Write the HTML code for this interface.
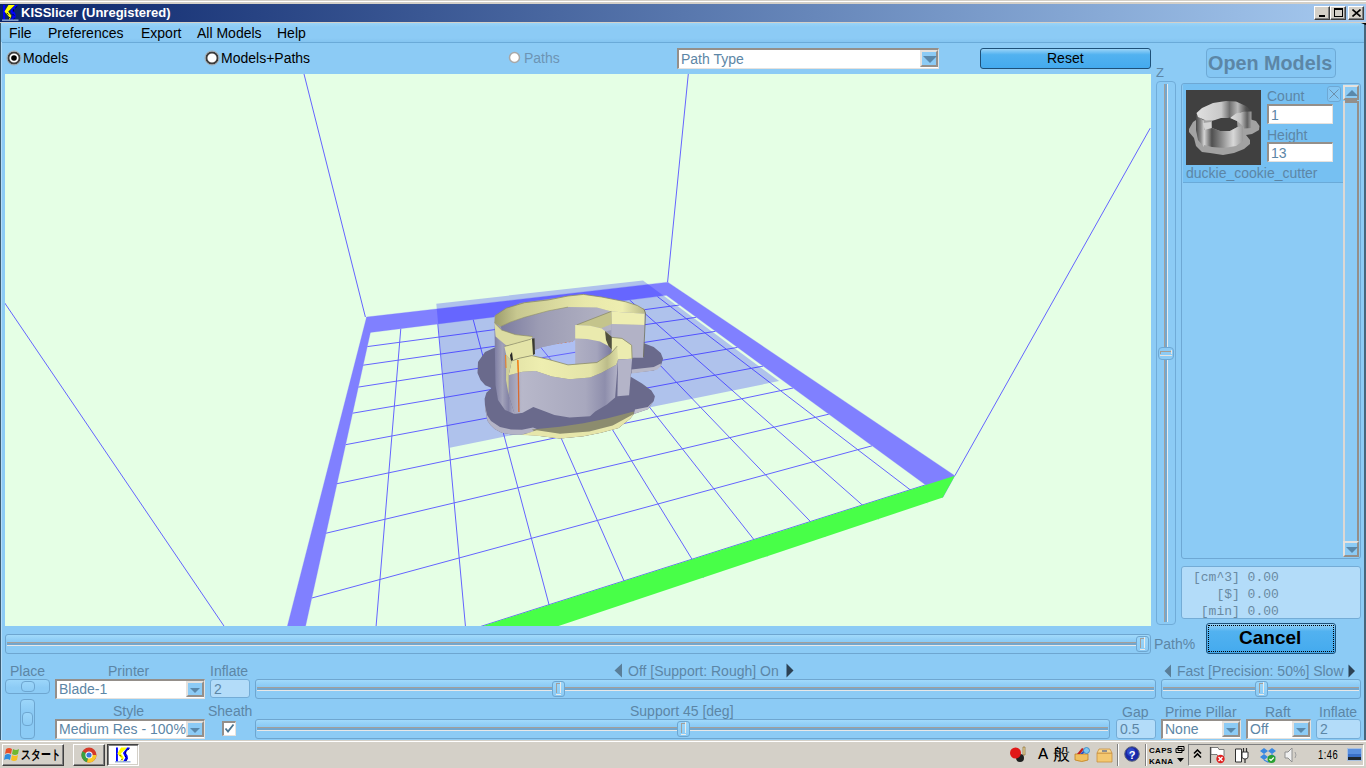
<!DOCTYPE html>
<html><head><meta charset="utf-8">
<style>
*{box-sizing:border-box;margin:0;padding:0}
html,body{width:1366px;height:768px;overflow:hidden;background:#8ccbf5;font-family:"Liberation Sans",sans-serif;position:relative}
.a{position:absolute}
.t{position:absolute;white-space:pre;line-height:1}
.lbl{color:#5c86a6;font-size:14px}
.blk{color:#000;font-size:14px}
.wb{position:absolute;top:6px;width:16px;height:14px;background:#d4d0c8;border:1px solid;border-color:#fff #404040 #404040 #fff;box-shadow:inset -1px -1px #808080}
.frame{position:absolute;border:1px solid #6ea8d4;border-radius:3px}
.inp{position:absolute;background:#fff;border-top:2px solid #948f8a;border-left:2px solid #948f8a;border-bottom:1px solid #e6e2de;border-right:1px solid #e6e2de}
.ddbtn{position:absolute;background:#8ccbf5;border:2px solid;border-color:#e6e2de #948f8a #948f8a #e6e2de}
.tri{position:absolute;width:0;height:0;border-left:6px solid transparent;border-right:6px solid transparent;border-top:6px solid #5a88aa}
.fld{position:absolute;background:#b3dcf9;border:1px solid #74acd6;border-radius:3px}
.track{position:absolute;height:2px;background:#8a9eae;border-bottom:0}
.trackl{position:absolute;height:1px;background:#e0e8ee}
.thumb{position:absolute;border:1px solid #6ea8d4;border-radius:3px;background:#8ccbf5}
</style></head><body>
<!-- window top -->
<div class="a" style="left:0;top:0;width:1366px;height:4px;background:#d4d0c8"></div>
<div class="a" style="left:0;top:1px;width:1366px;height:1px;background:#fff"></div>
<div class="a" style="left:0;top:4px;width:1366px;height:18px;background:linear-gradient(to right,#0a246a,#a6caf0)"></div>
<svg class="a" style="left:2px;top:5px" width="17" height="16" viewBox="0 0 16.5 15.5"><path d="M1 0h2v15h-2z" fill="#0000ff"/>
<path d="M12.5 0L15.2 0L14.8 1.2L12.6 3L11.2 5.6L13 8.5L13.4 11.5L12 13.8L8 15L9.6 12.5L10.6 10.5L9.2 7.8L8.2 5.6Z" fill="#0000ff"/>
<path d="M6.3 0L12.5 0L6 6.3L9.1 10.4L7.2 15L6.8 11.5L2.4 6.3Z" fill="#ffff00"/>
<path d="M14.5 1.5l-1.2 1M11 4.5v1.5M10.5 9l1 1M12 13l-1 1M7.5 12l-1 1M5 8l1 1" stroke="#000" stroke-width="0.8" stroke-linecap="round"/>
<path d="M0 14h16v1.5h-16z" fill="#8ea8d0" opacity="0.9"/>
</svg>
<div class="t" style="left:21px;top:6px;font-size:13px;font-weight:bold;color:#fff">KISSlicer (Unregistered)</div>
<div class="wb" style="left:1314px"><div class="a" style="left:4px;top:8px;width:6px;height:2px;background:#000"></div></div>
<div class="wb" style="left:1330px"><div class="a" style="left:3px;top:1px;width:9px;height:9px;border:1px solid #000;border-top-width:2px"></div></div>
<div class="wb" style="left:1348px"><svg class="a" style="left:3px;top:2px" width="9" height="8"><path d="M0.5 0.5L8.5 7.5M8.5 0.5L0.5 7.5" stroke="#000" stroke-width="1.6"/></svg></div>
<div class="a" style="left:0;top:22px;width:1366px;height:1px;background:#d4d0c8"></div>

<!-- menu -->
<div class="a" style="left:0;top:23px;width:1366px;height:19px;background:linear-gradient(#9ad4f8 0,#8ccbf5 4px,#8ccbf5 15px,#84c4f0 19px)"></div>
<div class="a" style="left:0;top:42px;width:1366px;height:1px;background:#6aaad8"></div>
<div class="t blk" style="left:9px;top:26px">File</div>
<div class="t blk" style="left:48px;top:26px">Preferences</div>
<div class="t blk" style="left:141px;top:26px">Export</div>
<div class="t blk" style="left:197px;top:26px">All Models</div>
<div class="t blk" style="left:277px;top:26px">Help</div>

<!-- borders -->
<div class="a" style="left:0;top:23px;width:1px;height:717px;background:#3c5c72"></div><div class="a" style="left:1px;top:42px;width:1px;height:698px;background:#b4dcf8"></div>
<div class="a" style="left:1364px;top:23px;width:2px;height:717px;background:#46667c"></div><div class="a" style="left:1361px;top:23px;width:5px;height:2px;background:#000;clip-path:polygon(0 0,100% 0,100% 100%)"></div>

<!-- toolbar -->
<!-- radio Models -->
<svg class="a" style="left:6px;top:50px" width="16" height="16"><circle cx="8" cy="8" r="5.6" fill="#fff" stroke="#3c3c3c" stroke-width="2"/><circle cx="8" cy="8" r="7" fill="none" stroke="#a8a8a8" stroke-width="1"/><circle cx="8" cy="8" r="2.8" fill="#000"/></svg>
<div class="t blk" style="left:23px;top:51px">Models</div>
<svg class="a" style="left:204px;top:50px" width="16" height="16"><circle cx="8" cy="8" r="5.6" fill="#fff" stroke="#3c3c3c" stroke-width="2"/><circle cx="8" cy="8" r="7" fill="none" stroke="#a8a8a8" stroke-width="1"/></svg>
<div class="t blk" style="left:221px;top:51px">Models+Paths</div>
<svg class="a" style="left:508px;top:51px" width="14" height="14"><circle cx="6.5" cy="6.5" r="5" fill="#fff" stroke="#a8a8a8" stroke-width="1.5"/></svg>
<div class="t lbl" style="left:524px;top:51px;color:#6c94b4">Paths</div>
<!-- Path Type dropdown -->
<div class="inp" style="left:677px;top:48px;width:262px;height:21px"></div>
<div class="t lbl" style="left:681px;top:52px;color:#5c86a6">Path Type</div>
<div class="ddbtn" style="left:920px;top:50px;width:18px;height:17px"><div class="tri" style="left:1px;top:4px;border-left-width:7px;border-right-width:7px;border-top-width:7px"></div></div>
<!-- Reset button -->
<div class="a" style="left:980px;top:48px;width:171px;height:21px;border:1px solid #1e5078;border-radius:3px;background:linear-gradient(#9ad4f8 0,#52b2f0 30%,#44aaee 100%)"></div>
<div class="t blk" style="left:1047px;top:51px">Reset</div>


<!-- viewport -->
<div class="a" style="left:5px;top:74px;width:1146px;height:552px;background:#e5ffe5;overflow:hidden">
<svg width="1146" height="552" viewBox="0 0 1146 552" style="position:absolute;left:0;top:0" shape-rendering="crispEdges">
<line x1="299.0" y1="0.0" x2="360.4" y2="243.0" stroke="#6464ff" stroke-width="1" shape-rendering="auto"/>
<line x1="683.3" y1="0.0" x2="662.6" y2="208.0" stroke="#6464ff" stroke-width="1" shape-rendering="auto"/>
<line x1="1145.2" y1="54.2" x2="949.9" y2="401.7" stroke="#6464ff" stroke-width="1" shape-rendering="auto"/>
<line x1="-0.4" y1="228.8" x2="219.3" y2="552.5" stroke="#6464ff" stroke-width="1" shape-rendering="auto"/>
<path d="M395.8 254.6L365.9 614.7M432.8 250.0L463.2 582.2M468.2 245.6L550.0 553.1M502.1 241.3L627.9 527.1M534.7 237.2L698.3 503.6M565.8 233.3L762.1 482.3M595.8 229.6L820.2 462.9M624.6 226.0L873.3 445.1M652.3 222.5L922.2 428.8M362.3 272.6L674.5 231.0M358.2 291.2L691.3 243.3M353.3 313.1L710.5 257.3M347.6 339.2L732.5 273.4M340.6 370.7L758.1 292.1M332.0 409.7L788.1 314.0M321.1 459.2L823.8 340.2M306.8 524.0L867.1 371.8M287.3 612.4L920.5 410.9" stroke="#6464ff" stroke-width="1" fill="none" shape-rendering="auto"/>
<path d="M365.41 258.43 L661.38 221.37 L662.76 208.14 L361.58 243.05ZM365.41 258.43 L280.45 643.26 L265.01 619.76 L361.58 243.05ZM661.38 221.37 L937.81 423.53 L949.88 401.71 L662.76 208.14Z" fill="#8080ff" fill-rule="nonzero" stroke="#8080ff" stroke-width="0.3" shape-rendering="auto"/>
<polygon points="280.5,643.3 937.8,423.5 949.9,401.7 265.0,619.8" fill="#48ff48" shape-rendering="auto"/>
<polygon points="431.3,229.7 638.0,206.4 774.1,307.1 444.7,373.7" fill="#2424ff" fill-opacity="0.28" shape-rendering="auto"/>
<g transform="translate(-5,-74)" shape-rendering="auto"><defs>
<linearGradient id="wallg" x1="0" x2="1" y1="0" y2="0">
<stop offset="0" stop-color="#9494ae"/><stop offset="0.12" stop-color="#b8b8ca"/><stop offset="0.4" stop-color="#b0b0c4"/><stop offset="0.7" stop-color="#a8a8be"/><stop offset="0.88" stop-color="#8e8eac"/><stop offset="1" stop-color="#b4b4c8"/>
</linearGradient>
<linearGradient id="backg" x1="0" x2="1" y1="0" y2="0">
<stop offset="0" stop-color="#7c7ca0"/><stop offset="0.35" stop-color="#9c9cb4"/><stop offset="1" stop-color="#b4b4c4"/>
</linearGradient>
<linearGradient id="rimg" x1="0" x2="1" y1="0" y2="0">
<stop offset="0" stop-color="#9c9c6c"/><stop offset="0.15" stop-color="#c8c890"/><stop offset="0.6" stop-color="#e8e8aa"/><stop offset="0.85" stop-color="#eeeeb0"/><stop offset="1" stop-color="#b8b888"/>
</linearGradient>
<linearGradient id="frimg" x1="0" x2="1" y1="0" y2="0">
<stop offset="0" stop-color="#e2e2a6"/><stop offset="0.3" stop-color="#eeeeb0"/><stop offset="0.75" stop-color="#e4e4a8"/><stop offset="0.9" stop-color="#bcbc8a"/><stop offset="1" stop-color="#e0e0a6"/>
</linearGradient>
<linearGradient id="beakg" x1="0" x2="1" y1="0" y2="0">
<stop offset="0" stop-color="#b0b0c4"/><stop offset="0.6" stop-color="#a4a4bc"/><stop offset="1" stop-color="#7a7aa0"/>
</linearGradient>
</defs>
<!-- flange dark blob -->
<path d="M496 347 L485 352 L478 362 L477.5 373 L480.5 380 L485.2 385.2 L491.7 388.1 L486.4 392.8 L484.6 398.7 L485.2 409.2 L487.6 420.9 L490.5 425 L494.6 429.1 L501.6 432.7 L511 434.4 L521.6 434.5 L540 436 L560 438.5 L583.4 436.2 L601 432.7 L618.6 428 L630.3 418.6 L633.8 413.9 L647.9 409.2 L653.75 401 L654.9 396.3 L651.4 390.5 L642 383.4 L630.3 376.4 L631.5 372.9 L653.75 370.5 L660.8 365.9 L663.1 358.8 L660.8 353 L653.75 347.1 L642 342.4 L631.5 341.25 L600 330 L520 330 Z" fill="#6a6a8c"/>
<!-- lit edge left -->
<path d="M485 405 L487 415 L491 421 L500 427 L511 429.5 L522 429.8 L533 427.5 L540 430.3 L521.6 434.5 L511 434.4 L501.6 432.7 L494.6 429.1 L490.5 425 L487.6 420.9 L485.2 409.2 Z" fill="#b4b4c6"/>
<path d="M631.5 369.4 L653.75 367 L660.8 363.5 L660.8 365.9 L657.3 369.4 L653.75 370.5 L631.5 373.5 Z" fill="#b8b8c8"/>
<path d="M635 409.5 L647.9 406.9 L653 401.5 L647.9 409.2 L633.8 413.9 Z" fill="#c0c0cc"/>
<!-- khaki + cream bottom -->
<path d="M532 429.5 L560 426.8 L583.4 423.3 L606.9 418.6 L633.8 411.6 L633.8 413.9 L630.3 418.6 L618.6 428 L601 432.7 L583.4 436.2 L560 438.5 L540 436 Z" fill="#8c8c6e"/>
<path d="M536.8 430.3 L560 433.8 L589.3 431.5 L612.7 425.6 L633.8 413.9 L630.3 418.6 L618.6 428 L601 432.7 L583.4 436.2 L560 438.5 L540 436 L521.6 435 Z" fill="#e6e6aa"/>

<path d="M494.4 316 L520 303 L583 294 L645 309 L643 357 L617 357 L612 362 L509 362 L496 345 Z" fill="#9c9cb6"/>
<!-- inner hole floor -->
<path d="M530 352 L534.5 350 L542.7 347.1 L559 343.6 L573 341.25 L577 338 L577 366 L530 366 Z" fill="#aebff2"/>
<path d="M538 344 L556 366 M528 360 L577 352" stroke="#6464ff" stroke-width="1" fill="none"/>
<path d="M556.7 343.6 L573 341.25" stroke="#e06a30" stroke-width="1" stroke-dasharray="2 2" fill="none"/>

<!-- back inner wall (grey) -->
<path d="M500.8 326.4 L510.8 321.9 L524.5 317.3 L548 310.9 L568 307.1 L596.9 307.6 L611.4 311.4 L611.4 330 L577 338.4 L573 341.25 L559 343.6 L542.7 347.1 L534.5 350 L520 350 L505 345 Z" fill="url(#backg)"/>
<!-- band A back rim -->
<path d="M495.3 315.5 L506.2 308.2 L524.5 302.7 L548 300 L568 296 L583.4 294.4 L601.7 297 L625.8 301.8 L637.3 305.5 L644.1 309.5 L645.1 313.8 L625.8 312.4 L611.4 311.4 L596.9 307.6 L568 307.1 L548 310.9 L524.5 317.3 L510.8 321.9 L500.8 326.4 L494.4 322.8 Z" fill="url(#rimg)"/>
<path d="M495.3 315.5 L506.2 308.2 L524.5 302.7 L548 300 L568 296 L583.4 294.4 L601.7 297 L625.8 301.8 L637.3 305.5 L644.1 309.5" stroke="#8e8e66" stroke-width="0.8" fill="none"/>
<path d="M500.8 326.4 L510.8 321.9 L524.5 317.3 L548 310.9 L568 307.1" stroke="#8e8e66" stroke-width="0.6" fill="none"/>
<!-- grey tail outer wall -->
<linearGradient id="tailg" x1="0" x2="1"><stop offset="0" stop-color="#7c7ca2"/><stop offset="0.4" stop-color="#a2a2ba"/><stop offset="0.7" stop-color="#8484a6"/><stop offset="1" stop-color="#b0b0c4"/></linearGradient>
<path d="M494.4 322.8 L495.7 336.5 L504.4 346.5 L506.2 354.7 L508.7 375 L508.7 395.2 L514.5 413.9 L505 410 L498 400 L495.5 385 Z" fill="url(#tailg)"/>
<!-- band B -->
<path d="M494.4 322.8 L501.7 330 L515.3 334.6 L532.7 336.5 L530.8 339.2 L515.3 343.8 L506.2 345.6 L495.7 336.5 Z" fill="#dcdca2"/>
<path d="M494.4 322.8 L501.7 330 L515.3 334.6 L532.7 336.5" stroke="#8e8e66" stroke-width="0.7" fill="none"/>
<!-- band C neck piece -->
<path d="M504.4 346.5 L530.8 339.2 L533.6 338.3 L534.5 354.7 L519 358.3 L511.7 361 L506.2 354.7 Z" fill="#e4e4a8"/>
<path d="M532 338.5 L534.5 338.3 L535 354 L533 355 Z" fill="#3a3a30"/>
<path d="M504.4 346.5 L530.8 339.2" stroke="#8e8e66" stroke-width="0.7" fill="none"/>
<path d="M510 355 L512 352 L513 360 L511 362 Z" fill="#282828"/>

<!-- head grey wall -->
<path d="M611.4 324 L644.6 324.9 L643.2 357.7 L630 357.7 L611.4 345 Z" fill="#b2b2c6"/>
<!-- head band E -->
<path d="M611.4 311.4 L625.8 312.4 L644.6 313.8 L644.6 324.9 L611.4 324 Z" fill="#eeeeb2"/>
<path d="M644.1 309.5 L645.5 313 L645 325 L643.5 357" stroke="#707058" stroke-width="0.8" fill="none"/>
<!-- beak grey inner wall -->
<path d="M575.2 338.4 L587 339 L600 341.5 L608 345 L611.4 348 L611.4 362 L575.2 366 Z" fill="url(#beakg)"/>
<!-- beak khaki band F -->
<path d="M576.7 324.9 L611.4 311.4 L611.9 324 L601.2 328.3 L589 325.8 Z" fill="#c4c48c"/>
<path d="M576.7 324.9 L611.4 311.4" stroke="#8e8e66" stroke-width="0.8" fill="none"/>
<!-- beak band G -->
<path d="M575.2 324.9 L590 325.8 L601.7 328.4 L609.4 334.5 L611.9 338.4 L611.9 350 L608.5 346 L600 341.5 L587 339 L575.2 338.4 Z" fill="#eaeaae"/>
<path d="M605 331 L611.9 337 L611.9 350 L608.5 346 L606 340 Z" fill="#50503e"/>
<!-- neck right piece -->
<path d="M611.9 337.4 L622 338.4 L631.6 345.2 L632.1 358.7 L618.1 359.6 L611.9 352 Z" fill="#ececb0"/>
<path d="M618.1 359.6 L632.1 358.7 L629.1 395.2 L617.4 396.3 Z" fill="#b4b4c8"/>
<path d="M611.9 337.4 L622 338.4 L631.6 345.2 L632.1 358.7" stroke="#8e8e66" stroke-width="0.8" fill="none"/>
<!-- front wall grey -->
<path d="M508.7 375.2 L522.7 371.7 L535.6 371.1 L552 376.4 L569.6 379.3 L590 377.6 L601 372.9 L616.25 364.7 L618.1 359.6 L615.1 397.5 L606.9 404.5 L595.2 411.6 L590 416.25 L569.6 417.4 L554.4 415 L542.7 410.4 L533.3 406.9 L522.7 412.7 L514.5 413.9 L508.7 395.2 Z" fill="url(#wallg)"/>
<!-- front rim band D -->
<path d="M511.7 361 L519 358.3 L531.8 355.6 L548 359.3 L568 364.9 L596.9 362.5 L610.4 353.8 L617.2 346.1 L618.1 359.6 L616.25 364.7 L601 372.9 L590 377.6 L569.6 379.3 L552 376.4 L535.6 371.1 L522.7 371.7 L508.7 375.2 Z" fill="url(#frimg)"/>
<path d="M511.7 361 L519 358.3 L531.8 355.6 L548 359.3 L568 364.9 L596.9 362.5 L610.4 353.8 L617.2 346.1" stroke="#8e8e66" stroke-width="0.8" fill="none"/>
<!-- left neck front wall (cream top + grey) -->
<path d="M506.2 354.7 L511.7 361 L508.7 375.2 L508.7 395 L506 380 Z" fill="#cfcf98"/>
<path d="M518.3 372 L518.9 412" stroke="#d86a30" stroke-width="1.3"/>
<path d="M517.8 360 L518.3 372" stroke="#f08018" stroke-width="1.6"/>
<path d="M505.5 355 L506 368" stroke="#f08020" stroke-width="1"/>
</g>
</svg>
</div>

<!-- Z slider -->
<div class="t lbl" style="left:1156px;top:66px;font-size:13px">Z</div>
<div class="a" style="left:1156px;top:81px;width:20px;height:544px;border:1px solid #70acd8;border-radius:4px"></div>
<div class="a" style="left:1164px;top:84px;width:1px;height:538px;background:#a39f9b"></div><div class="a" style="left:1165px;top:84px;width:2px;height:538px;background:#74a6cc"></div>
<div class="a" style="left:1167px;top:84px;width:1px;height:538px;background:#e8ecee"></div>
<div class="a" style="left:1158px;top:347px;width:16px;height:13px;border:1px solid #6ea8d4;border-radius:4px;background:#8ccbf5"></div>
<div class="a" style="left:1160px;top:351px;width:12px;height:1px;background:#a89c90"></div>
<div class="a" style="left:1160px;top:351px;width:1px;height:3px;background:#a89c90"></div>
<div class="a" style="left:1171px;top:350px;width:1px;height:4px;background:#e8e4e0"></div>
<div class="a" style="left:1160px;top:355px;width:12px;height:1px;background:#e8e4e0"></div>

<!-- Open Models -->
<div class="a" style="left:1206px;top:48px;width:130px;height:30px;border:1px solid #6eaad6;border-radius:4px;background:#84c6f3"></div>
<div class="t" style="left:1208px;top:54px;font-size:19.8px;font-weight:bold;color:#5c86a6">Open Models</div>

<!-- model list panel -->
<div class="a" style="left:1181px;top:83px;width:180px;height:476px;border:1px solid #6ea8d4;border-radius:3px;background:#8ccbf5"></div>
<div class="a" style="left:1183px;top:84px;width:160px;height:99px;background:#76c0f2;border-bottom:1px solid #6aaad8"></div>
<div class="a" style="left:1186px;top:90px;width:75px;height:75px;background:#404040;overflow:hidden">
<svg width="75" height="75" viewBox="0 0 75 75" style="position:absolute;left:0;top:0">
<defs>
<linearGradient id="tfw" x1="0" x2="1"><stop offset="0" stop-color="#d8d8d8"/><stop offset="0.2" stop-color="#505050"/><stop offset="0.45" stop-color="#8a8a8a"/><stop offset="0.75" stop-color="#d8d8d8"/><stop offset="1" stop-color="#9a9a9a"/></linearGradient>
<linearGradient id="tlc" x1="0" x2="1"><stop offset="0" stop-color="#484848"/><stop offset="0.6" stop-color="#8a8a8a"/><stop offset="1" stop-color="#d0d0d0"/></linearGradient>
<linearGradient id="ttop" x1="0" x2="1"><stop offset="0" stop-color="#e0e0e0"/><stop offset="0.45" stop-color="#c8c8c8"/><stop offset="0.6" stop-color="#707070"/><stop offset="0.75" stop-color="#b8b8b8"/><stop offset="0.9" stop-color="#505050"/><stop offset="1" stop-color="#404040"/></linearGradient>
<linearGradient id="thw" x1="0" x2="1"><stop offset="0" stop-color="#e0e0e0"/><stop offset="0.5" stop-color="#c0c0c0"/><stop offset="0.8" stop-color="#606060"/><stop offset="1" stop-color="#a0a0a0"/></linearGradient>
</defs>
<path d="M3 39 L7 32 L10 30 L60 28 L70 31 L73.5 36 L73 40 L66 44 L60 45 L64 50 L64 54 L58 59 L48 63 L37 65 L24 63 L16 62 L10 56 L8 48 L3 42 Z" fill="#a2a2a2"/>
<path d="M10 24 L18 31 L18 57 L12 50 L10 40 Z" fill="url(#tlc)"/>
<path d="M10.5 23 L16 18 L27 13 L40 11 L50 11.5 L60 16 L65.5 21 L55 22 L48 26.5 L40 28.5 L30 30 L20 30.5 L12 27 Z" fill="url(#ttop)"/>
<path d="M26 31 L35 28 L45 28 L51 31 L51.5 37 L44 41 L34 41 L26 38 Z" fill="#404040"/>
<path d="M44 28 L50 23.5 L58 21.5 L65.5 21.5 L65.5 38 L58 38.5 L57 36 L51 31 Z" fill="url(#thw)"/>
<path d="M17 33 L25 32 L25.5 40 L19 41 Z" fill="#d4d4d4"/>
<path d="M18 40 L26 38 L34 41 L44 41 L51.5 37 L57 36 L57 51 L50 56 L38 58 L26 57 L18 55 Z" fill="url(#tfw)"/>
</svg>


</div>
<div class="t lbl" style="left:1267px;top:89px">Count</div>
<div class="inp" style="left:1267px;top:104px;width:66px;height:20px"></div>
<div class="t lbl" style="left:1271px;top:108px">1</div>
<div class="t lbl" style="left:1267px;top:128px">Height</div>
<div class="inp" style="left:1267px;top:142px;width:66px;height:20px"></div>
<div class="t lbl" style="left:1271px;top:146px">13</div>
<div class="a" style="left:1327px;top:86px;width:14px;height:16px;border:1px solid #6ea8d4;border-radius:3px;background:#84c6f3"></div>
<svg class="a" style="left:1329px;top:89px" width="10" height="10"><path d="M0.5 0.5L9.5 9.5M9.5 0.5L0.5 9.5" stroke="#6c90ac" stroke-width="1"/></svg>
<div class="t lbl" style="left:1186px;top:166px">duckie_cookie_cutter</div>
<!-- scrollbar -->
<div class="a" style="left:1343px;top:85px;width:16px;height:472px;background:#8ccbf5"></div>
<div class="a" style="left:1343px;top:101px;width:2px;height:440px;background:#dcd8d4"></div>
<div class="a" style="left:1357px;top:101px;width:2px;height:440px;background:#948f8a"></div>
<div class="ddbtn" style="left:1343px;top:85px;width:16px;height:15px"><div class="tri" style="left:1px;top:3px;border-top:0;border-bottom:6px solid #5a88aa"></div></div>
<div class="a" style="left:1345px;top:100px;width:12px;height:3px;background:#948f8a"></div>
<div class="ddbtn" style="left:1343px;top:541px;width:16px;height:16px"><div class="tri" style="left:1px;top:4px"></div></div>

<!-- stats -->
<div class="a" style="left:1181px;top:566px;width:180px;height:53px;border:1px solid #74acd6;border-radius:3px;background:#b3dcf9"></div>
<div class="t" style="left:1193px;top:569px;font-family:'Liberation Mono',monospace;font-size:13px;color:#6a8aa2;line-height:17px">[cm^3] 0.00
   [$] 0.00
 [min] 0.00</div>

<!-- Cancel -->
<div class="a" style="left:1206px;top:623px;width:130px;height:31px;border:1px solid #1e5078;border-radius:3px;background:linear-gradient(#9ad4f8 0,#52b2f0 25%,#44aaee 100%)"></div>
<div class="a" style="left:1208px;top:625px;width:126px;height:27px;border:1px dotted #000"></div>
<div class="t" style="left:1239px;top:628px;font-size:19px;font-weight:bold;color:#000">Cancel</div>


<div class="a" style="left:5px;top:634px;width:1146px;height:20px;border:1px solid #6ea6d0;border-radius:3px;background:linear-gradient(#a2dafb 0,#8ccbf5 6px)"></div>
<div class="a" style="left:7px;top:642px;width:1142px;height:1px;background:#a39f9b"></div>
<div class="a" style="left:7px;top:643px;width:1142px;height:2px;background:#74a6cc"></div>
<div class="a" style="left:7px;top:645px;width:1142px;height:1px;background:#e8e8e8"></div>
<div class="a" style="left:1136px;top:636px;width:13px;height:16px;border:1px solid #6ea6d0;border-radius:3px;background:linear-gradient(#9ad6fa,#8ccbf5)"></div>
<div class="a" style="left:1140px;top:638px;width:1px;height:10px;background:#a39f9b"></div>
<div class="a" style="left:1140px;top:638px;width:4px;height:1px;background:#a39f9b"></div>
<div class="a" style="left:1144px;top:637px;width:1px;height:11px;background:#ecebe8"></div>
<div class="a" style="left:1140px;top:649px;width:5px;height:1px;background:#ecebe8"></div>
<div class="t lbl" style="left:1154px;top:637px;">Path%</div>
<div class="t lbl" style="left:10px;top:664px;">Place</div>
<div class="a" style="left:5px;top:679px;width:45px;height:15px;border:1px solid #6ea6d0;border-radius:4px;background:linear-gradient(#9cd6fa,#8ccbf5 60%)"></div>
<div class="a" style="left:21px;top:681px;width:14px;height:11px;border:1px solid #6ea6d0;border-radius:4px;background:linear-gradient(#9cd6fa,#8ccbf5)"></div>
<div class="a" style="left:20px;top:699px;width:15px;height:40px;border:1px solid #6ea6d0;border-radius:4px;background:linear-gradient(#9cd6fa,#8ccbf5 30%)"></div>
<div class="a" style="left:22px;top:712px;width:11px;height:14px;border:1px solid #6ea6d0;border-radius:4px;background:linear-gradient(#9cd6fa,#8ccbf5)"></div>
<div class="t lbl" style="left:108px;top:664px;">Printer</div>
<div class="inp" style="left:55px;top:679px;width:150px;height:20px"></div>
<div class="t lbl" style="left:59px;top:682px;">Blade-1</div>
<div class="ddbtn" style="left:186px;top:681px;width:18px;height:16px"><div class="tri" style="left:2px;top:5px;border-left-width:5px;border-right-width:5px;border-top-width:5px"></div></div>
<div class="t lbl" style="left:113px;top:704px;">Style</div>
<div class="inp" style="left:55px;top:719px;width:150px;height:20px"></div>
<div class="t lbl" style="left:59px;top:722px;">Medium Res - 100%</div>
<div class="ddbtn" style="left:186px;top:721px;width:18px;height:16px"><div class="tri" style="left:2px;top:5px;border-left-width:5px;border-right-width:5px;border-top-width:5px"></div></div>
<div class="t lbl" style="left:210px;top:664px;">Inflate</div>
<div class="fld" style="left:210px;top:679px;width:40px;height:19px"></div>
<div class="t lbl" style="left:214px;top:682px;">2</div>
<div class="t lbl" style="left:208px;top:704px;">Sheath</div>
<div class="a" style="left:222px;top:721px;width:14px;height:15px;background:#fff;border-top:2px solid #948f8a;border-left:2px solid #948f8a;border-bottom:1px solid #e6e2de;border-right:1px solid #e6e2de"></div>
<svg class="a" style="left:224px;top:723px" width="11" height="11"><path d="M1.5 5.5L4 8.5L9.5 1.5" stroke="#4a7490" stroke-width="1.8" fill="none"/></svg>
<svg class="a" style="left:614px;top:663px" width="9" height="15"><path d="M8 0.5V14.5L0.5 7.5Z" fill="#5a7e98"/></svg>
<div class="t lbl" style="left:628px;top:664px;">Off [Support: Rough] On</div>
<svg class="a" style="left:786px;top:663px" width="9" height="15"><path d="M0.5 0.5V14.5L7.5 7.5Z" fill="#2c4254"/></svg>
<div class="a" style="left:255px;top:679px;width:901px;height:20px;border:1px solid #6ea6d0;border-radius:3px;background:linear-gradient(#a2dafb 0,#8ccbf5 6px)"></div>
<div class="a" style="left:257px;top:687px;width:897px;height:1px;background:#a39f9b"></div>
<div class="a" style="left:257px;top:688px;width:897px;height:2px;background:#74a6cc"></div>
<div class="a" style="left:257px;top:690px;width:897px;height:1px;background:#e8e8e8"></div>
<div class="a" style="left:552px;top:681px;width:13px;height:16px;border:1px solid #6ea6d0;border-radius:3px;background:linear-gradient(#9ad6fa,#8ccbf5)"></div>
<div class="a" style="left:556px;top:683px;width:1px;height:10px;background:#a39f9b"></div>
<div class="a" style="left:556px;top:683px;width:4px;height:1px;background:#a39f9b"></div>
<div class="a" style="left:560px;top:682px;width:1px;height:11px;background:#ecebe8"></div>
<div class="a" style="left:556px;top:694px;width:5px;height:1px;background:#ecebe8"></div>
<div class="t lbl" style="left:630px;top:704px;">Support 45 [deg]</div>
<div class="a" style="left:255px;top:719px;width:855px;height:20px;border:1px solid #6ea6d0;border-radius:3px;background:linear-gradient(#a2dafb 0,#8ccbf5 6px)"></div>
<div class="a" style="left:257px;top:727px;width:851px;height:1px;background:#a39f9b"></div>
<div class="a" style="left:257px;top:728px;width:851px;height:2px;background:#74a6cc"></div>
<div class="a" style="left:257px;top:730px;width:851px;height:1px;background:#e8e8e8"></div>
<div class="a" style="left:677px;top:721px;width:13px;height:16px;border:1px solid #6ea6d0;border-radius:3px;background:linear-gradient(#9ad6fa,#8ccbf5)"></div>
<div class="a" style="left:681px;top:723px;width:1px;height:10px;background:#a39f9b"></div>
<div class="a" style="left:681px;top:723px;width:4px;height:1px;background:#a39f9b"></div>
<div class="a" style="left:685px;top:722px;width:1px;height:11px;background:#ecebe8"></div>
<div class="a" style="left:681px;top:734px;width:5px;height:1px;background:#ecebe8"></div>
<svg class="a" style="left:1164px;top:664px" width="8" height="14"><path d="M7 0.5V13.5L0.5 7Z" fill="#5a7e98"/></svg>
<div class="t lbl" style="left:1177px;top:664px;">Fast [Precision: 50%] Slow</div>
<svg class="a" style="left:1348px;top:664px" width="8" height="14"><path d="M0.5 0.5V13.5L7 7Z" fill="#2c4254"/></svg>
<div class="a" style="left:1161px;top:679px;width:200px;height:20px;border:1px solid #6ea6d0;border-radius:3px;background:linear-gradient(#a2dafb 0,#8ccbf5 6px)"></div>
<div class="a" style="left:1163px;top:687px;width:196px;height:1px;background:#a39f9b"></div>
<div class="a" style="left:1163px;top:688px;width:196px;height:2px;background:#74a6cc"></div>
<div class="a" style="left:1163px;top:690px;width:196px;height:1px;background:#e8e8e8"></div>
<div class="a" style="left:1255px;top:681px;width:13px;height:16px;border:1px solid #6ea6d0;border-radius:3px;background:linear-gradient(#9ad6fa,#8ccbf5)"></div>
<div class="a" style="left:1259px;top:683px;width:1px;height:10px;background:#a39f9b"></div>
<div class="a" style="left:1259px;top:683px;width:4px;height:1px;background:#a39f9b"></div>
<div class="a" style="left:1263px;top:682px;width:1px;height:11px;background:#ecebe8"></div>
<div class="a" style="left:1259px;top:694px;width:5px;height:1px;background:#ecebe8"></div>
<div class="t lbl" style="left:1122px;top:705px;">Gap</div>
<div class="fld" style="left:1116px;top:719px;width:40px;height:20px"></div>
<div class="t lbl" style="left:1120px;top:722px;">0.5</div>
<div class="t lbl" style="left:1165px;top:705px;">Prime Pillar</div>
<div class="inp" style="left:1161px;top:719px;width:80px;height:20px"></div>
<div class="t lbl" style="left:1165px;top:722px;">None</div>
<div class="ddbtn" style="left:1222px;top:721px;width:18px;height:16px"><div class="tri" style="left:2px;top:5px;border-left-width:5px;border-right-width:5px;border-top-width:5px"></div></div>
<div class="t lbl" style="left:1265px;top:705px;">Raft</div>
<div class="inp" style="left:1246px;top:719px;width:65px;height:20px"></div>
<div class="t lbl" style="left:1250px;top:722px;">Off</div>
<div class="ddbtn" style="left:1292px;top:721px;width:18px;height:16px"><div class="tri" style="left:2px;top:5px;border-left-width:5px;border-right-width:5px;border-top-width:5px"></div></div>
<div class="t lbl" style="left:1319px;top:705px;">Inflate</div>
<div class="fld" style="left:1316px;top:719px;width:45px;height:20px"></div>
<div class="t lbl" style="left:1320px;top:722px;">2</div>

<!-- taskbar -->
<div class="a" style="left:0;top:740px;width:1366px;height:28px;background:#d4d0c8"></div>
<div class="a" style="left:0;top:741px;width:1366px;height:1px;background:#fff"></div>
<!-- start button -->
<div class="a" style="left:2px;top:744px;width:62px;height:22px;background:#d4d0c8;border:1px solid;border-color:#fff #404040 #404040 #fff;box-shadow:inset -1px -1px #808080"></div>
<svg class="a" style="left:4px;top:746px" width="17" height="17" viewBox="0 0 17 17">
<path d="M2 3Q5 1 8 3L7 8Q4 6 1 8Z" fill="#e8502a"/>
<path d="M9 3Q12 5 15 3L14 8Q11 10 8 8Z" fill="#70b830"/>
<path d="M1 9Q4 7 7 9L6 14Q3 12 0 14Z" fill="#2e8ee0"/>
<path d="M8 9Q11 11 14 9L13 14Q10 16 7 14Z" fill="#f8c020"/>
</svg>
<div class="t" style="left:21px;top:748px;font-size:13px;font-weight:bold;color:#000;transform:scaleX(0.76);transform-origin:0 0">スタート</div>
<!-- chrome button -->
<div class="a" style="left:73px;top:744px;width:32px;height:22px;background:#d4d0c8;border:1px solid;border-color:#fff #404040 #404040 #fff;box-shadow:inset -1px -1px #808080"></div>
<svg class="a" style="left:81px;top:747px" width="16" height="16" viewBox="0 0 16 16">
<circle cx="8" cy="8" r="7.5" fill="#d43a2a"/>
<path d="M8 8L1.5 4.2A7.5 7.5 0 0 0 6 15.3Z" fill="#3aa040"/>
<path d="M8 8L6 15.3A7.5 7.5 0 0 0 15.5 8Z" fill="#f8c828"/>
<circle cx="8" cy="8" r="3.6" fill="#fff"/><circle cx="8" cy="8" r="2.6" fill="#3a78d8"/>
</svg>
<!-- kisslicer pressed -->
<div class="a" style="left:107px;top:744px;width:32px;height:22px;background:#fff;border:1px solid;border-color:#404040 #fff #fff #404040;box-shadow:inset 1px 1px #808080, inset -1px -1px #d4d0c8"></div>
<svg class="a" style="left:115px;top:747px" width="16" height="16" viewBox="0 0 16.5 15.5"><path d="M1 0h2v15h-2z" fill="#0000ff"/>
<path d="M12.5 0L15.2 0L14.8 1.2L12.6 3L11.2 5.6L13 8.5L13.4 11.5L12 13.8L8 15L9.6 12.5L10.6 10.5L9.2 7.8L8.2 5.6Z" fill="#0000ff"/>
<path d="M6.3 0L12.5 0L6 6.3L9.1 10.4L7.2 15L6.8 11.5L2.4 6.3Z" fill="#ffff00"/>
<path d="M14.5 1.5l-1.2 1M11 4.5v1.5M10.5 9l1 1M12 13l-1 1M7.5 12l-1 1M5 8l1 1" stroke="#000" stroke-width="0.8" stroke-linecap="round"/>
<path d="M0 14h16v1.5h-16z" fill="#8ea8d0" opacity="0.9"/>
</svg>
<!-- IME toolbar -->
<svg class="a" style="left:1009px;top:746px" width="18" height="18" viewBox="0 0 18 18">
<path d="M14 1h2v8h-2z" fill="#e8d8a0" stroke="#806020" stroke-width="0.6"/>
<circle cx="11" cy="12" r="4" fill="#202020"/>
<circle cx="6.5" cy="7" r="5.5" fill="#e01818"/>
</svg>
<div class="t" style="left:1038px;top:746px;font-size:17px;color:#000;font-family:'Liberation Mono',monospace">A</div>
<div class="t" style="left:1053px;top:746px;font-size:17px;color:#000">般</div>
<svg class="a" style="left:1074px;top:746px" width="17" height="17" viewBox="0 0 17 17">
<path d="M1 8h13v6q-6 3-13 0z" fill="#f0c060" stroke="#c08020" stroke-width="0.8"/>
<path d="M3 8l5-6 2 1-4 5z" fill="#c02020"/><path d="M6 8l6-6 1 1-4 5z" fill="#3050c0"/>
<circle cx="12.5" cy="4.5" r="3" fill="#80c8f0" stroke="#3080c0" stroke-width="0.8"/>
</svg>
<svg class="a" style="left:1096px;top:747px" width="17" height="16" viewBox="0 0 17 16">
<path d="M1 6h15v9h-15z" fill="#f4c870" stroke="#c89040" stroke-width="0.8"/>
<path d="M3 2h11l2 4h-15z" fill="#f8d890" stroke="#c89040" stroke-width="0.8"/>
<path d="M6 3h5v2h-5z" fill="#909090"/>
</svg>
<div class="a" style="left:1117px;top:744px;width:1px;height:22px;background:#808080"></div>
<div class="a" style="left:1118px;top:744px;width:1px;height:22px;background:#fff"></div>
<svg class="a" style="left:1124px;top:746px" width="16" height="16" viewBox="0 0 16 16">
<circle cx="8" cy="8" r="7.3" fill="#1828a8" stroke="#606878" stroke-width="1"/>
<circle cx="7" cy="6" r="4" fill="#4060e0" opacity="0.6"/>
<text x="8" y="12.5" font-size="11" font-weight="bold" fill="#fff" text-anchor="middle" font-family="Liberation Sans">?</text>
</svg>
<div class="a" style="left:1145px;top:744px;width:1px;height:22px;background:#808080"></div>
<div class="a" style="left:1146px;top:744px;width:1px;height:22px;background:#fff"></div>
<div class="t" style="left:1149px;top:745px;font-size:8px;font-weight:bold;color:#000;letter-spacing:0.3px;line-height:11px">CAPS<br>KANA</div>
<svg class="a" style="left:1175px;top:745px" width="11" height="20" viewBox="0 0 11 20">
<path d="M3 1.5h6v4h-6zM1 3.5h6v4h-6z" fill="none" stroke="#000" stroke-width="1"/>
<path d="M2 13h7l-3.5 4z" fill="#000"/>
</svg>
<!-- tray -->
<div class="a" style="left:1188px;top:744px;width:176px;height:22px;border:1px solid;border-color:#808080 #fff #fff #808080"></div>
<svg class="a" style="left:1193px;top:749px" width="9" height="10" viewBox="0 0 9 10"><path d="M1 4.5L4.5 1L8 4.5M1 8.5L4.5 5L8 8.5" fill="none" stroke="#000" stroke-width="1.6"/></svg>
<svg class="a" style="left:1209px;top:746px" width="17" height="18" viewBox="0 0 17 18">
<path d="M1.5 1v16" stroke="#404040" stroke-width="1.2"/>
<path d="M2 1.5h7l1 2h5v7h-6l-1-2h-6z" fill="#fff" stroke="#606060" stroke-width="0.8"/>
<circle cx="11.5" cy="13" r="4.2" fill="#e02020"/>
<path d="M9.5 11l4 4M13.5 11l-4 4" stroke="#fff" stroke-width="1.4"/>
</svg>
<svg class="a" style="left:1234px;top:746px" width="16" height="18" viewBox="0 0 16 18">
<path d="M1.5 3h6v13h-6z" fill="#fff" stroke="#303030" stroke-width="1"/>
<path d="M8 6h6v5q0 2-3 2t-3-2z" fill="#fff" stroke="#303030" stroke-width="1"/>
<path d="M9.5 2v4M12.5 2v4M11 13v4" stroke="#303030" stroke-width="1.2"/>
</svg>
<svg class="a" style="left:1259px;top:746px" width="18" height="18" viewBox="0 0 18 18">
<path d="M1 5l4-3 4 3-4 3zM9 5l4-3 4 3-4 3zM1 11l4-3 4 3-4 3zM9 11l4-3 4 3-4 3z" fill="#3a88e0"/>
<path d="M5 14l4 2 4-2" fill="none" stroke="#3a88e0" stroke-width="1.2"/>
<circle cx="12.5" cy="13" r="4" fill="#28a030"/>
<path d="M10.5 13l1.5 1.5 2.8-3" fill="none" stroke="#fff" stroke-width="1.2"/>
</svg>
<svg class="a" style="left:1284px;top:747px" width="14" height="16" viewBox="0 0 14 16">
<path d="M1 5h3l4-4v14l-4-4h-3z" fill="#f0f0f0" stroke="#909090" stroke-width="1"/>
<path d="M11 5q2 3 0 6" fill="none" stroke="#a0a0a0" stroke-width="1"/>
</svg>
<div class="t" style="left:1318px;top:749px;font-size:12.5px;color:#000;letter-spacing:0.6px;transform:scaleX(0.75);transform-origin:0 0">1:46</div>
<svg class="a" style="left:1347px;top:748px" width="15" height="13" viewBox="0 0 15 13">
<rect x="0.5" y="0.5" width="14" height="12" fill="#3a70c8" stroke="#a8c0e0" stroke-width="1"/>
<rect x="1" y="1" width="13" height="5" fill="#5a90e0"/>
<rect x="1" y="9" width="13" height="3" fill="#202830"/>
</svg>

</body></html>
